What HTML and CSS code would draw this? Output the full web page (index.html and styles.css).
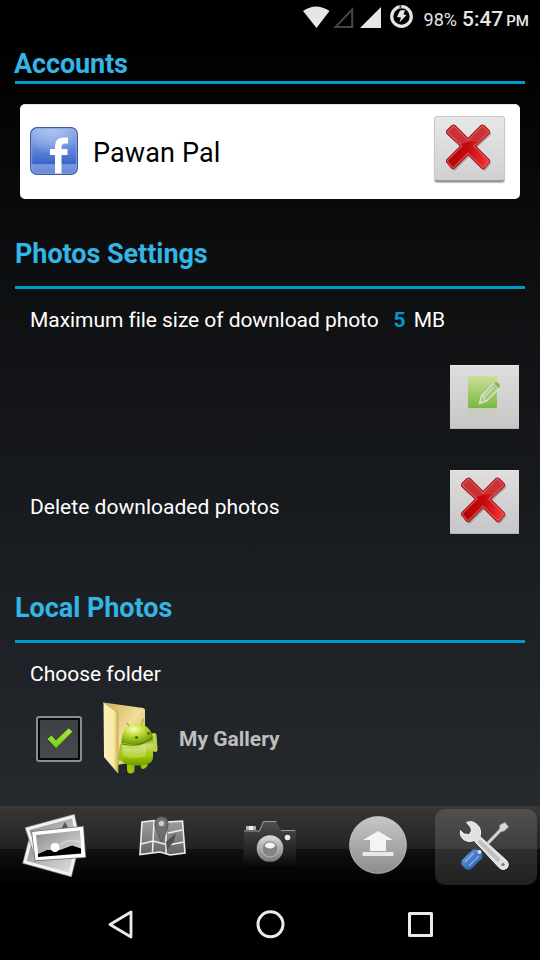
FILE: index.html
```html
<!DOCTYPE html>
<html lang="en">
<head>
<meta charset="utf-8">
<title>Settings</title>
<link rel="stylesheet" href="styles.css">
</head>
<body>
<svg class="defs" width="0" height="0" aria-hidden="true">
  <defs>
    <linearGradient id="redLow" x1="0" y1="0" x2="1" y2="0"><stop offset="0" stop-color="#b00004"/><stop offset=".5" stop-color="#c40b0e"/><stop offset="1" stop-color="#ff4444"/></linearGradient>
    <clipPath id="crossClip"><path d="M11 2 L24 15 L37 2 Q39 1 41 3 L45 7 Q47 9 45 11 L32 23 L45 36 Q47 38 45 40 L41 45 Q39 47 37 45 L24 32 L11 45 Q9 47 7 45 L3 40 Q1 38 3 36 L16 23 L3 11 Q1 9 3 7 L7 3 Q9 1 11 2Z"/></clipPath>
    <symbol id="cross" viewBox="0 0 49 49">
      <path d="M11 2 L24 15 L37 2 Q39 1 41 3 L45 7 Q47 9 45 11 L32 23 L45 36 Q47 38 45 40 L41 45 Q39 47 37 45 L24 32 L11 45 Q9 47 7 45 L3 40 Q1 38 3 36 L16 23 L3 11 Q1 9 3 7 L7 3 Q9 1 11 2Z" fill="#555" opacity=".45" transform="translate(1 1.5)"/>
      <g clip-path="url(#crossClip)">
        <rect width="50" height="50" fill="url(#redLow)"/>
        <path d="M0 0H50V23Q34 13 13 23L0 29Z" fill="#c83236"/>
        <path d="M11 2 L24 15 L37 2 Q39 1 41 3 L45 7 Q47 9 45 11 L32 23 L45 36 Q47 38 45 40 L41 45 Q39 47 37 45 L24 32 L11 45 Q9 47 7 45 L3 40 Q1 38 3 36 L16 23 L3 11 Q1 9 3 7 L7 3 Q9 1 11 2Z" fill="none" stroke="#ee7476" stroke-width="4" opacity=".65"/>
        <path d="M11 2 L24 15 L37 2 Q39 1 41 3 L45 7 Q47 9 45 11 L32 23 L45 36 Q47 38 45 40 L41 45 Q39 47 37 45 L24 32 L11 45 Q9 47 7 45 L3 40 Q1 38 3 36 L16 23 L3 11 Q1 9 3 7 L7 3 Q9 1 11 2Z" fill="none" stroke="#a31518" stroke-width="1.800"/>
      </g>
    </symbol>
  </defs>
</svg>
<div class="screen">
  <header class="status">
    <svg width="120" height="36" viewBox="298 0 120 36">
      <path d="M303 11Q316 2 329.500 11L316.500 28Z" fill="#e6e6e6"/>
      <path d="M352.200 9.500V27H335.500Z" fill="none" stroke="#464646" stroke-width="2"/>
      <path d="M381 7V28H360Z" fill="#e6e6e6"/>
      <circle cx="401.500" cy="16.500" r="9.800" fill="none" stroke="#e6e6e6" stroke-width="3.200"/>
      <path d="M400.500 5V8.500" stroke="#555" stroke-width="2"/>
      <path d="M400 10.500L405 10L403.500 14.500L406.500 15L399.500 22.500L401 17.500L397 17Z" fill="#e6e6e6"/>
    </svg>
    <span class="battery">98%</span><span class="clock">5:47</span><span class="ampm">PM</span>
  </header>
  <main>
    <section class="accounts">
      <h2><span class="t-accounts">Accounts</span></h2>
      <div class="card">
        <svg class="fb" width="48" height="48" viewBox="0 0 48 48">
          <defs>
            <linearGradient id="fb" x1="0" y1="0" x2="0" y2="1"><stop offset="0" stop-color="#8faee8"/><stop offset=".3" stop-color="#7699df"/><stop offset=".78" stop-color="#3963c8"/><stop offset=".79" stop-color="#7b99e0"/><stop offset="1" stop-color="#6287d5"/></linearGradient>
            <radialGradient id="fbGlow" cx=".45" cy="0" r=".6"><stop offset="0" stop-color="#b5cdf2" stop-opacity=".8"/><stop offset="1" stop-color="#b5cdf2" stop-opacity="0"/></radialGradient>
          </defs>
          <rect x=".6" y=".6" width="46.800" height="46.800" rx="6.500" fill="url(#fb)" stroke="#3d5a9d" stroke-width="1.200"/>
          <rect x="1.700" y="1.700" width="44.600" height="44.600" rx="5.500" fill="url(#fbGlow)" stroke="#9ab2e8" stroke-opacity=".7"/>
          <path d="M38 10.500V16.500H35Q31.500 16.500 31.500 20V22H37.500V28H31.500V46.500H25V28H20V22H25V19Q25 11 33 10.500Z" fill="#fff"/>
        </svg>
        <span class="name">Pawan Pal</span>
        <button class="btn card-btn" type="button" aria-label="Remove account"><svg width="49" height="49"><use href="#cross"/></svg></button>
      </div>
    </section>
    <section class="photos">
      <h2><span class="t-photos">Photos Settings</span></h2>
      <div class="size-row"><span class="t-size">Maximum file size of download photo</span><b>5</b><span class="t-mb">MB</span></div>
      <div class="edit-row">
        <button class="btn" type="button" aria-label="Edit size">
          <svg width="34" height="46" viewBox="0 0 34 46">
            <defs><linearGradient id="green" x1="0" y1="0" x2="0" y2="1"><stop offset="0" stop-color="#cce199"/><stop offset="1" stop-color="#78b842"/></linearGradient>
            <linearGradient id="reflect" x1="0" y1="0" x2="0" y2="1"><stop offset="0" stop-color="#a9ce87" stop-opacity=".3"/><stop offset="1" stop-color="#a9ce87" stop-opacity="0"/></linearGradient></defs>
            <rect x="1" y="1" width="29" height="32" rx="1" fill="url(#green)"/>
            <rect x="1" y="34" width="29" height="9" fill="url(#reflect)"/>
            <path d="M12.500 28.500L14.500 21L26.500 8.500L31.500 13.500L19.500 26Z" fill="#a0cc72" stroke="#d9dfd0" stroke-width="1.500"/>
            <path d="M14.500 21L17 22L17.500 25L19.500 26M17 22L27 12" fill="none" stroke="#d9dfd0" stroke-width="1.200"/>
            <path d="M12.500 28.500L13.300 25.300L15.600 27.500Z" fill="#d9dfd0"/>
            <path d="M27 8.500Q29.500 6 32 8.500Q34 10.500 31.500 13.500Z" fill="#82b957"/>
          </svg>
        </button>
      </div>
      <div class="delete-row"><span class="t-delete">Delete downloaded photos</span>
        <button class="btn" type="button" aria-label="Delete photos"><svg width="49" height="49"><use href="#cross"/></svg></button>
      </div>
    </section>
    <section class="local">
      <h2><span class="t-local">Local Photos</span></h2>
      <p><span class="t-choose">Choose folder</span></p>
      <div class="folder-row">
        <span class="check"><svg width="28" height="23" viewBox="0 0 28 23"><defs><linearGradient id="tick" x1="0" y1="0" x2="0" y2="1"><stop offset="0" stop-color="#a7ed42"/><stop offset="1" stop-color="#75ce0c"/></linearGradient></defs><path d="M1 12L5.500 8L10 13L22.500 1L27 4.500L10 21.500Z" fill="url(#tick)" stroke="#30343a" stroke-width=".8"/></svg></span>
        <svg class="folder" width="58" height="74" viewBox="101 701 58 74">
          <defs>
            <linearGradient id="fold" x1="0" y1="0" x2="1" y2="0"><stop offset="0" stop-color="#fbf2ba"/><stop offset=".7" stop-color="#f8e9a6"/><stop offset="1" stop-color="#d6b457"/></linearGradient>
            <linearGradient id="back" x1="0" y1="0" x2="1" y2="1"><stop offset="0" stop-color="#cfae58"/><stop offset=".5" stop-color="#f0df98"/><stop offset="1" stop-color="#c9ae5a"/></linearGradient>
            <radialGradient id="head" cx=".4" cy=".25" r=".75"><stop offset="0" stop-color="#f8fbc8"/><stop offset=".4" stop-color="#c2df3a"/><stop offset="1" stop-color="#6a9b00"/></radialGradient>
            <linearGradient id="torso" x1="0" y1="0" x2="0" y2="1"><stop offset="0" stop-color="#739d08"/><stop offset=".25" stop-color="#c9dc74"/><stop offset=".65" stop-color="#a3c900"/><stop offset="1" stop-color="#6c9900"/></linearGradient>
          </defs>
          <path d="M103.500 702.500L143 708Q145 708.500 145 710V760L117 765Z" fill="url(#back)"/>
          <path d="M103.500 702.500L118 712.500V773.500L104 757Z" fill="url(#fold)"/>
          <path d="M103.500 702.500L118 712.500V773" fill="none" stroke="#c3a458" stroke-width=".8"/>
          <path d="M127 723L130 728M143.500 719.500L140.500 726" stroke="#95bd18" stroke-width="1.300" stroke-linecap="round"/>
          <rect x="119" y="743" width="4.500" height="18" rx="2.200" fill="#9fbd36" transform="rotate(9 120 752)"/>
          <rect x="152" y="733" width="5" height="19" rx="2.500" fill="#b9d547" transform="rotate(-4 154 742)"/>
          <path d="M127 760H134.500V769Q134.500 773.500 130.500 773.500Q127 773.500 127 769ZM140 760H147.500V766Q144 770.500 141 768Z" fill="#9ac40b"/>
          <path d="M121.500 744Q138 749 153 738V757Q153 762 148 764Q136 767 126 764Q121 762 121 757Z" fill="url(#torso)"/>
          <path d="M121.500 743Q121 726 135 724Q149 723 152.500 736Q146 748 121.500 743Z" fill="url(#head)"/>
          <path d="M121.500 744Q142 748 153 737" fill="none" stroke="#5f8200" stroke-width="1.200"/>
          <path d="M124 747Q135 751 146 745V756Q135 760 123 756Z" fill="#fff" opacity=".23"/>
          <circle cx="136.500" cy="737.500" r="1.600" fill="#53650c"/><circle cx="148.500" cy="733.500" r="1.400" fill="#53650c"/>
        </svg>
        <b class="t-gallery">My Gallery</b>
      </div>
    </section>
  </main>
  <nav class="tabs">
    <a><svg width="108" height="82" viewBox="0 806 108 82">
      <defs><linearGradient id="pic" x1="0" y1="0" x2="1" y2="1"><stop offset="0" stop-color="#858585"/><stop offset="1" stop-color="#e6e6e6"/></linearGradient></defs>
      <path d="M32.500 833L77 846L70 874.500L25 862Z" fill="url(#pic)" stroke="#888" stroke-width="4.500"/>
      <path d="M32.500 833L77 846L70 874.500L25 862Z" fill="url(#pic)" stroke="#f2f2f2" stroke-width="3"/>
      <path d="M27.500 829L73 816.500L79 844L37 857Z" fill="url(#pic)" stroke="#888" stroke-width="4.500"/>
      <path d="M27.500 829L73 816.500L79 844L37 857Z" fill="url(#pic)" stroke="#f2f2f2" stroke-width="3"/>
      <path d="M61 829L65 822L69 829Z" fill="#555"/>
      <path d="M34 833.500L81.500 828.500L83.500 855.500L37 858.500Z" fill="url(#pic)" stroke="#777" stroke-width="5"/>
      <path d="M34 833.500L81.500 828.500L83.500 855.500L37 858.500Z" fill="url(#pic)" stroke="#fff" stroke-width="3.400"/>
      <path d="M38 857V854L47 850L60 850L72 845.500L81 848.500V853.500Z" fill="#000"/>
      <circle cx="55" cy="847.500" r="4.500" fill="#fff"/>
      <path d="M60 845Q68 838 80 842" fill="none" stroke="#fff" stroke-width="2" opacity=".3"/>
    </svg></a>
    <a><svg width="108" height="82" viewBox="108 806 108 82">
      <defs><linearGradient id="map" x1="0" y1="0" x2="0" y2="1"><stop stop-color="#a0a0a0"/><stop offset="1" stop-color="#626262"/></linearGradient></defs>
      <path d="M142 822L154 820.500L166 822L182.500 821L185 853L170 855L160 852L140 854.500Z" fill="url(#map)" stroke="#eee" stroke-width="1.600"/>
      <path d="M154 821L152.500 852M166 822L166 854M141 844L153 841L168 845L184 842M168 833L182 830" fill="none" stroke="#eee" stroke-width="1.500"/>
      <path d="M166 842L176 833L174 841L167 850Z" fill="#505050"/>
      <path d="M161.500 842Q155 828 155 824Q155 817 161.500 817Q168 817 168 824Q168 829 161.500 842Z" fill="#707070" stroke="#555"/>
      <circle cx="161.500" cy="823.500" r="2.800" fill="#ccc"/>
    </svg></a>
    <a><svg width="108" height="82" viewBox="216 806 108 82">
      <defs><linearGradient id="body" x1="0" y1="0" x2="0" y2="1"><stop stop-color="#505050"/><stop offset=".65" stop-color="#202020"/><stop offset="1" stop-color="#020202"/></linearGradient><linearGradient id="lens" x1="0" y1="0" x2="0" y2="1"><stop stop-color="#ddd"/><stop offset="1" stop-color="#777"/></linearGradient></defs>
      <path d="M244 830H259L263 821H276L281 830H296V868Q296 870 294 870H245Q243 870 243 868Z" fill="url(#body)"/>
      <path d="M244 831H259.500L263.500 821.500H276.500M281 830.500H295" fill="none" stroke="#999" stroke-width="1"/>
      <rect x="246" y="826" width="10" height="4" rx="1" fill="#b5b5b5"/><rect x="249" y="826" width="4" height="4" fill="#eee"/>
      <circle cx="270" cy="848.500" r="13.300" fill="url(#lens)"/><circle cx="270" cy="849" r="8.500" fill="#b8b8b8"/><circle cx="270" cy="849" r="7.500" fill="#858585"/><ellipse cx="270" cy="845.500" rx="5" ry="3" fill="#f4f4f4"/><circle cx="287.500" cy="837.500" r="2.800" fill="#eee"/>
    </svg></a>
    <a><svg width="108" height="82" viewBox="324 806 108 82">
      <defs><linearGradient id="disc" x1="0" y1="0" x2="0" y2="1"><stop stop-color="#c7c7c7"/><stop offset="1" stop-color="#8c8c8c"/></linearGradient></defs>
      <circle cx="378" cy="845" r="28.800" fill="url(#disc)"/><circle cx="378" cy="845" r="28.300" fill="none" stroke="#c0c0c0" opacity=".5"/>
      <path d="M378 831L393 840H386V851H370V840H363Z" fill="#f4f4f4"/><rect x="362.500" y="852" width="31" height="4" fill="#e8e8e8"/>
    </svg></a>
    <a class="selected"><svg width="102" height="76" viewBox="435 809 102 76">
      <defs><linearGradient id="handle" x1="0" y1="0" x2="1" y2="1"><stop stop-color="#8ab2e8"/><stop offset=".5" stop-color="#477ac3"/><stop offset="1" stop-color="#2857a0"/></linearGradient></defs>
      <path d="M487 842L499.500 829L500 825L505 822.500L508.500 827L504 831L501 831.500L489 844Z" fill="#d8d8d2" stroke="#aaa" stroke-width=".8"/>
      <path d="M462 860L473 849.500Q477 848 480.500 851Q483 854 482 858L472 868Q468 871 464 867.500Q460 864 462 860Z" fill="url(#handle)" stroke="#315da0"/>
      <path d="M465 862L474 853M469 866L479 856" stroke="#8db3e5" stroke-width="1.200"/>
      <circle cx="479.500" cy="852" r="2" fill="#ddd"/>
      <path d="M466.500 822.500L470.500 827Q473 832 468.500 834.500L464 834L460.500 830.500Q459.500 837 464.500 840Q469 843 474 840.500L499 867.500Q503 871 507 868Q510 864 506 860L480 836.500Q482 829 477 824.500Q472 820 466.500 822.500Z" fill="#e1e1df" stroke="#f5f5f3" stroke-width="1"/>
      <path d="M480 842L498 859.500" stroke="#bcc0c4" stroke-width="4" stroke-linecap="round"/><circle cx="503" cy="864.500" r="1.600" fill="#777"/>
    </svg></a>
  </nav>
  <footer class="keys">
    <svg width="30" height="32" viewBox="105 909 30 32"><path d="M131 912V937L110 924.500Z" fill="none" stroke="#ebebeb" stroke-width="2.800" stroke-linejoin="round"/></svg>
    <svg width="30" height="32" viewBox="255 909 30 32"><circle cx="270.500" cy="924.300" r="12.500" fill="none" stroke="#ebebeb" stroke-width="3"/></svg>
    <svg width="30" height="32" viewBox="405 909 30 32"><rect x="409.500" y="913.500" width="22" height="22" fill="none" stroke="#ebebeb" stroke-width="3" stroke-linejoin="round"/></svg>
  </footer>
</div>
</body>
</html>
```
FILE: styles.css
```css
* { box-sizing: border-box; }
body { margin: 0; background: #000; font-family: Roboto, sans-serif; }
svg { display: block; flex: none; }
.screen { width: 540px; height: 960px; overflow: hidden; display: flex; flex-direction: column; background: #000; }
.status { height: 38px; padding-right: 11px; display: flex; justify-content: flex-end; align-items: baseline; color: #e6e6e6; line-height: 38px; white-space: nowrap; }
.status svg { align-self: flex-start; margin-right: 6px; }
.battery { font-size: 18px; margin-right: 5px; }
.clock { font-size: 21px; font-weight: 500; margin-right: 3px; }
.ampm { font-size: 15px; font-weight: 500; }
main { height: 768px; background: linear-gradient(#000, #0d0e10 30%, #252a2f); color: #fff; font-size: 21px; }
section { display: flex; flex-direction: column; }
h2 { margin: 0 15px; border-bottom: 3px solid #0099cc; color: #33b5e5; font-size: 27px; line-height: 32px; font-weight: 700; letter-spacing: -.05px; white-space: nowrap; }
.accounts { height: 200px; }
.accounts h2 { height: 46px; padding-top: 10px; text-indent: -1px; letter-spacing: -.12px; }
.card { margin: 20px 20px 0; height: 95px; padding: 0 15px 0 10px; display: flex; align-items: center; gap: 15px; background: #fff; border-radius: 5px; color: #000; border-top: 1px solid #e4e4e4; }
.fb { margin-top: -2px; }
.name { font-size: 27px; line-height: 36px; padding-top: 2px; letter-spacing: .12px; white-space: nowrap; }
.btn { width: 69px; height: 64px; flex: none; padding: 6px 2px 0 0; border: 0; border-radius: 1px; background: linear-gradient(#dedede, #c6c6c6); box-shadow: inset 0 1px #e7e7e7, inset 0 -1px #b5b5b5; display: flex; justify-content: center; align-items: flex-start; }
.card-btn { margin: -7px 0 0 auto; width: 71px; height: 66px; padding-top: 6px; border: 1px solid #c8c8c8; border-bottom: 2px solid #999; border-radius: 3px; box-shadow: 0 1px 1px #bbb; background: linear-gradient(#e7e7e7, #d0d0d0); }
.photos { height: 354px; }
.photos h2, .local h2 { height: 51px; }
.size-row { display: flex; padding: 15px 30px 0; line-height: 32px; height: 76px; white-space: nowrap; }
.t-size { letter-spacing: -.055px; }
.size-row b { color: #0099cc; margin-left: 15px; margin-right: 8px; }
.edit-row { display: flex; justify-content: flex-end; height: 105px; padding-right: 21px; }
.edit-row .btn { padding-top: 10px; }
.delete-row { display: flex; justify-content: space-between; align-items: flex-start; padding: 0 21px 0 30px; line-height: 32px; }
.t-delete { padding-top: 21px; letter-spacing: .03px; }
.local p { margin: 0; padding: 15px 30px 0; height: 58px; line-height: 32px; }
.folder-row { display: flex; padding-left: 36px; }
.check { width: 46px; height: 46px; margin-top: 15px; padding: 0 0 2px 2px; border: 2px solid #8b8d90; border-radius: 3px; background: linear-gradient(#3c3f44, #484a4f); box-shadow: inset 0 0 0 2px #08090b; display: flex; align-items: center; justify-content: center; }
.folder { margin-left: 19px; }
.t-gallery { color: #bebebe; line-height: 32px; margin: 22px 0 0 20px; white-space: nowrap; }
.tabs { height: 82px; display: flex; background: linear-gradient(#383838, #222 43px, #101010 43px, #000 80px); }
.tabs a { width: 108px; }
.tabs .selected { width: 102px; height: 76px; margin: 3px 0 0 3px; border-radius: 10px; background: rgba(255,255,255,.13); }
.keys { height: 72px; padding: 21px 105px 0; display: flex; justify-content: space-between; }
```
